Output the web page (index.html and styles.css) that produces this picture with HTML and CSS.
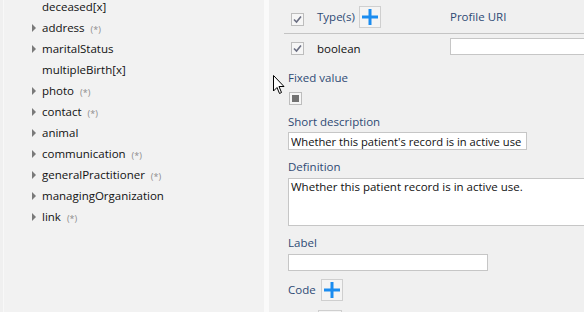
FILE: index.html
```html
<!DOCTYPE html>
<html lang="en">
<head>
   <meta charset="UTF-8">
   <meta name="viewport" content="width=device-width, initial-scale=1.0">
   <title>Element Editor</title>
   <link rel="stylesheet" href="styles.css">
</head>
<body>
    <div class="window">
        <div class="tree">
            <div class="tree_item"><span class="arrow blank"></span>deceased[x]</div>
            <div class="tree_item"><span class="arrow"></span>address <span class="card">(*)</span></div>
            <div class="tree_item"><span class="arrow"></span>maritalStatus</div>
            <div class="tree_item"><span class="arrow blank"></span>multipleBirth[x]</div>
            <div class="tree_item"><span class="arrow"></span>photo <span class="card">(*)</span></div>
            <div class="tree_item"><span class="arrow"></span>contact <span class="card">(*)</span></div>
            <div class="tree_item"><span class="arrow"></span>animal</div>
            <div class="tree_item"><span class="arrow"></span>communication <span class="card">(*)</span></div>
            <div class="tree_item"><span class="arrow"></span>generalPractitioner <span class="card">(*)</span></div>
            <div class="tree_item"><span class="arrow"></span>managingOrganization</div>
            <div class="tree_item"><span class="arrow"></span>link <span class="card">(*)</span></div>
        </div>
        <div class="splitter"></div>
        <div class="details">
            <div class="types">
                <div class="types_row types_head">
                    <span class="check"><svg width="13" height="13" viewBox="0 0 13 13"><path d="M3 6.5 L5.5 9 L10 3.5" fill="none" stroke="#6a6e82" stroke-width="1.6"/></svg></span>
                    <div class="types_name">
                        <span class="label">Type(s)</span>
                        <button class="add"><svg width="16" height="16" viewBox="0 0 16 16"><path d="M8 0 V16 M0 8 H16" stroke="#1a8cf0" stroke-width="3"/></svg></button>
                    </div>
                    <span class="label">Profile URI</span>
                </div>
                <div class="types_row">
                    <span class="check"><svg width="13" height="13" viewBox="0 0 13 13"><path d="M3 6.5 L5.5 9 L10 3.5" fill="none" stroke="#6a6e82" stroke-width="1.6"/></svg></span>
                    <div class="types_name">boolean</div>
                    <input class="field profile" type="text">
                </div>
            </div>

            <div class="label gap_fixed">Fixed value</div>
            <span class="check small"><span class="indeterminate"></span></span>

            <div class="label gap_short">Short description</div>
            <input class="field short" type="text" value="Whether this patient's record is in active use">

            <div class="label gap_def">Definition</div>
            <textarea class="field definition">Whether this patient record is in active use.</textarea>

            <div class="label gap_def">Label</div>
            <input class="field labelbox" type="text">

            <div class="code_row">
                <span class="label">Code</span>
                <button class="add"><svg width="16" height="16" viewBox="0 0 16 16"><path d="M8 0 V16 M0 8 H16" stroke="#1a8cf0" stroke-width="3"/></svg></button>
            </div>
            <div class="stub"></div>
        </div>
    </div>
    <svg class="cursor" width="12" height="20" viewBox="0 0 12 20">
        <path d="M0.5 0.5 V16 L4 12.5 L6.5 18.5 L8.5 17.5 L6 11.5 H11 Z" fill="#fff" stroke="#000" stroke-width="1"/>
    </svg>
</body>
</html>
```

FILE: styles.css
```css
body {
    margin: 0;
    width: 584px;
    height: 312px;
    overflow: hidden;
    font-family: "Open Sans", "Noto Sans", sans-serif;
    font-size: 11.5px;
    color: #111;
    background: #f0f0f0;
}
.window {
    display: flex;
    height: 312px;
}
.tree {
    flex: none;
    width: 260px;
    margin-left: 3px;
    background: #f2f2f2;
    border-left: 1px solid #f8f8f8;
    margin-top: -4px;
}
.tree_item {
    height: 21px;
    line-height: 21px;
    display: flex;
    align-items: center;
    padding-left: 28px;
    white-space: pre;
}
.arrow {
    width: 0;
    height: 0;
    border-top: 4px solid transparent;
    border-bottom: 4px solid transparent;
    border-left: 4px solid #7a7a7a;
    margin-right: 6px;
}
.arrow.blank { border-left-color: transparent; }
.card {
    font-size: 9px;
    color: #8c8c8c;
    margin-left: 3px;
    padding-top: 3px;
}
.splitter {
    flex: none;
    width: 5px;
    background: #fafafa;
}
.details {
    flex: 1;
    min-width: 0;
    padding-left: 19px;
    display: flex;
    flex-direction: column;
    align-items: flex-start;
}
.details > * { flex-shrink: 0; }
.label {
    color: #2e4a74;
    line-height: 16px;
    height: 16px;
}
.types {
    margin-left: -4px;
    align-self: stretch;
}
.types_row {
    display: grid;
    grid-template-columns: 26px 133px 1fr;
    align-items: center;
    padding-left: 7px;
}
.types_head {
    height: 33px;
    border-bottom: 1px solid #c4c4c4;
}
.types_row:last-child { height: 28px; }
.types_name {
    display: flex;
    align-items: center;
    gap: 4px;
}
.check {
    width: 11px;
    height: 11px;
    border: 1px solid #bdbdbd;
    background: #f6f6f6;
    display: flex;
    align-items: center;
    justify-content: center;
}
.check svg { margin: -1px; }
.types_head .check { margin-top: 6px; }
.add {
    width: 22px;
    height: 22px;
    padding: 0;
    border: 1px solid #cfcfcf;
    background: #f4f4f4;
    display: flex;
    align-items: center;
    justify-content: center;
}
.field {
    box-sizing: border-box;
    border: 1px solid #c6c6c6;
    background: #fff;
    font-family: "Open Sans", "Noto Sans", sans-serif;
    font-size: 11.5px;
    color: #111;
    padding: 0 2px;
    margin: 0;
    outline: none;
}
.profile {
    height: 17px;
    width: 160px;
    margin-top: -3px;
}
.gap_fixed { margin-top: 8px; }
.check.small {
    margin-top: 6px;
    margin-left: 1px;
    width: 11px;
    height: 11px;
}
.indeterminate {
    width: 7px;
    height: 7px;
    background: #727272;
}
.gap_short { margin-top: 9px; }
.short {
    margin-top: 2px;
    width: 239px;
    height: 18px;
    line-height: 16px;
    font-size: 11.2px;
}
.gap_def { margin-top: 9px; }
.definition {
    margin-top: 3px;
    width: 310px;
    height: 48px;
    resize: none;
    line-height: 16px;
    padding-top: 0;
    overflow: hidden;
}
.labelbox {
    margin-top: 3px;
    width: 200px;
    height: 17px;
}
.code_row {
    margin-top: 8px;
    display: flex;
    align-items: center;
    gap: 5px;
}
.stub {
    margin-top: 9px;
    margin-left: 30px;
    width: 22px;
    height: 10px;
    border: 1px solid #cfcfcf;
    background: #f4f4f4;
}
.cursor {
    position: absolute;
    left: 273px;
    top: 75px;
}
```
